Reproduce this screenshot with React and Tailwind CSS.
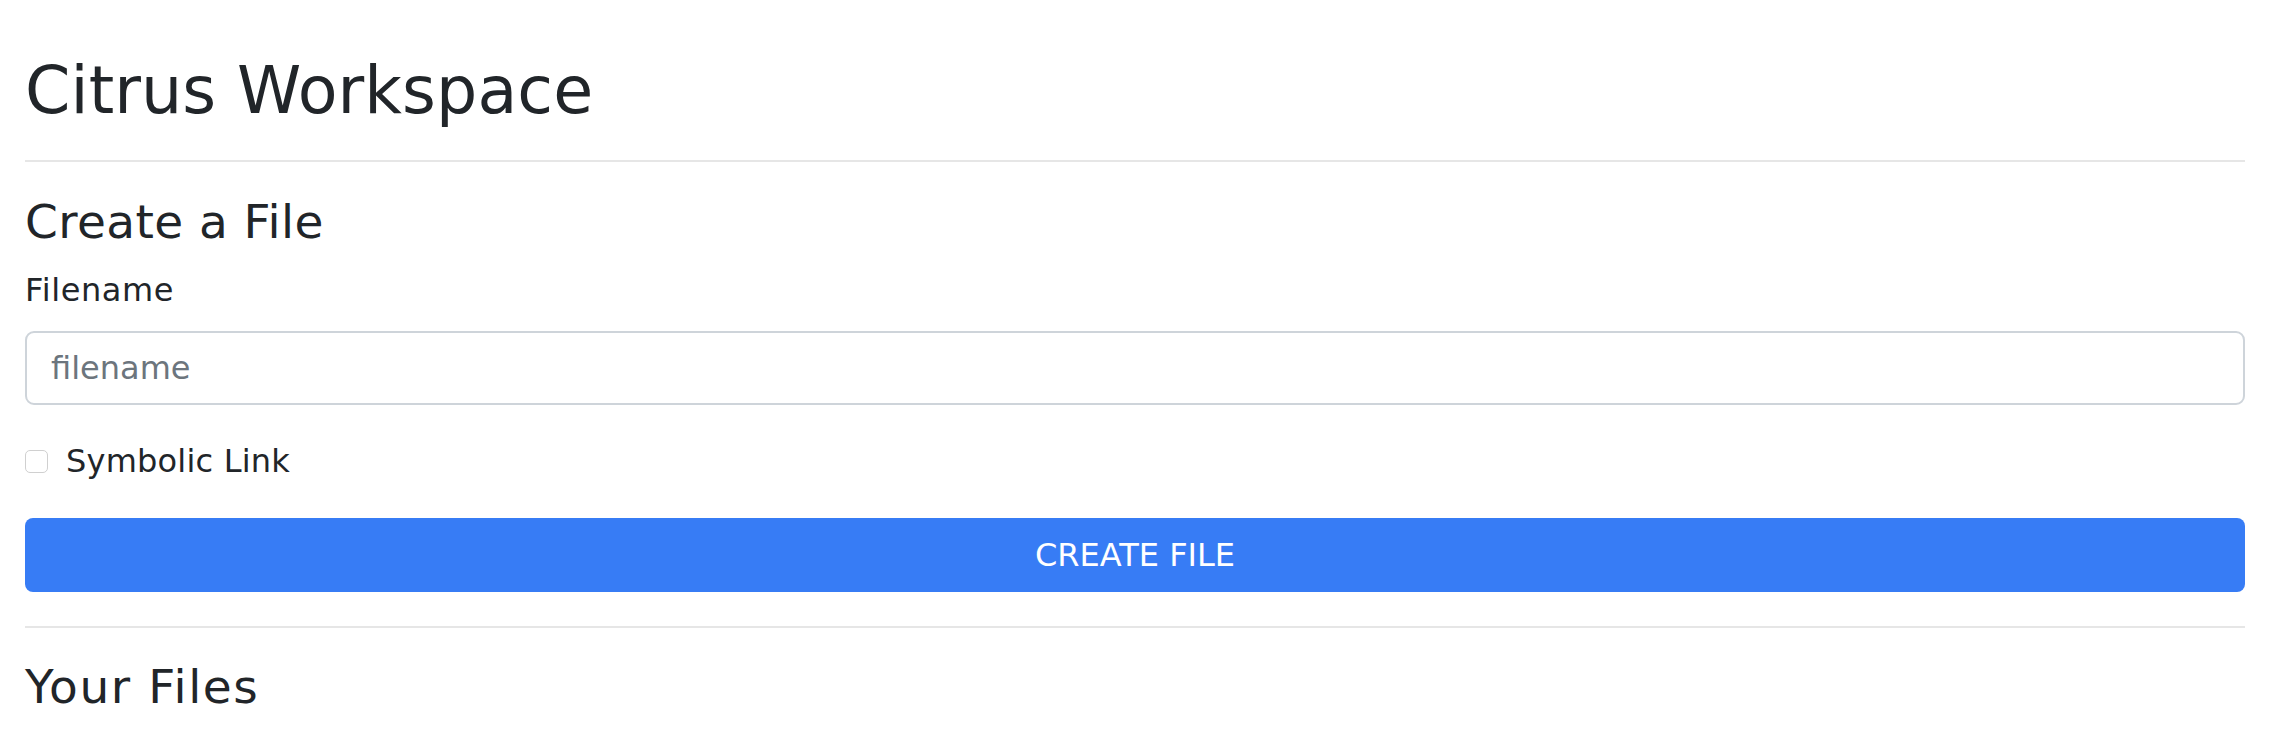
import React, { useState } from 'react';

const App = () => {
    const [filename, setFilename] = useState('');
    const [symlink, setSymlink] = useState(false);

    return (
        <div className="min-h-screen bg-white text-[#212529] font-['DejaVu_Sans',sans-serif] pl-[25px] pr-[35px] pt-[52px]">
            <h1 className="text-[65px] leading-[78px] font-normal tracking-[0.1px]">Citrus Workspace</h1>
            <div className="mt-[30px] h-[2px] bg-[#e6e6e6]" />

            <h3 className="mt-[32px] text-[47px] leading-[56px] font-normal tracking-[0.4px]">Create a File</h3>
            <label htmlFor="filename" className="block mt-[16px] text-[32px] leading-[48px] tracking-[0.6px]">Filename</label>
            <input
                id="filename"
                value={filename}
                onChange={e => setFilename(e.target.value)}
                placeholder="filename"
                className="mt-[17px] block w-full h-[74px] border-2 border-[#ced4da] rounded-[9px] px-[24px] text-[32px] text-[#212529] placeholder:text-[#6c757d] outline-none"
            />

            <label className="mt-[32px] flex items-center gap-[18px] text-[32px] leading-[48px] tracking-[0.2px] cursor-pointer">
                <input
                    type="checkbox"
                    checked={symlink}
                    onChange={() => setSymlink(!symlink)}
                    className="appearance-none w-[23px] h-[23px] rounded-[5px] border border-[#d0d0d0] bg-white checked:bg-[#377cf5]"
                />
                Symbolic Link
            </label>

            <button className="mt-[33px] w-full h-[74px] rounded-[8px] bg-[#377cf5] text-white text-[32px] uppercase">
                Create File
            </button>
            <div className="mt-[34px] h-[2px] bg-[#e6e6e6]" />

            <h3 className="mt-[31px] text-[47px] leading-[56px] font-normal tracking-[1.6px]">Your Files</h3>
        </div>
    );
};
export default App;
